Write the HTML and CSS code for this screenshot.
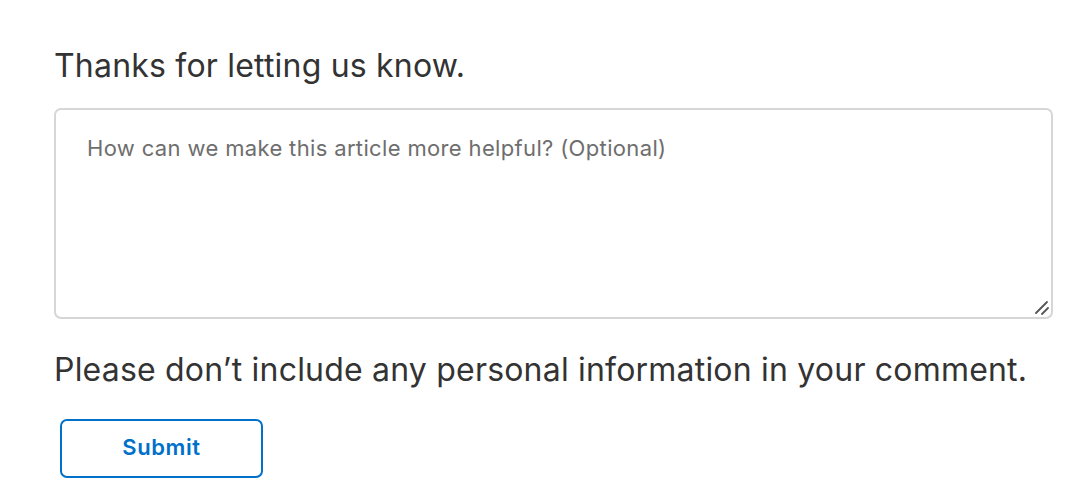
FILE: index.html
```html
<!DOCTYPE html>
<html lang="en">
<head>
  <meta charset="UTF-8">
  <meta name="viewport" content="width=device-width, initial-scale=1.0">
  <title>Feedback</title>
  <link rel="stylesheet" href="styles.css">
</head>
<body>

<div class="feedback">
  <p class="feedback-title">Thanks for letting us know.</p>
  <div class="feedback-field">
    <textarea class="feedback-text" placeholder="How can we make this article more helpful? (Optional)"></textarea>
    <svg class="feedback-grip" width="16" height="16" viewBox="0 0 16 16">
      <line x1="2" y1="14" x2="13" y2="3" stroke="#555" stroke-width="1.8" stroke-linecap="round"/>
      <line x1="8" y1="15" x2="14" y2="9" stroke="#555" stroke-width="1.8" stroke-linecap="round"/>
    </svg>
  </div>
  <p class="feedback-note">Please don’t include any personal information in your comment.</p>
  <button class="feedback-submit">Submit</button>
</div>

</body>
</html>
```

FILE: styles.css
```css
body {
  margin: 0;
  font-family: Inter, "Noto Sans", sans-serif;
  background-color: #fff;
  color: #333;
}
.feedback {
  padding: 46px 40px 0 54px;
  display: flex;
  flex-direction: column;
  align-items: flex-start;
}
.feedback-title {
  margin: 0;
  font-size: 32px;
  letter-spacing: 0.2px;
  line-height: 40px;
}
.feedback-field {
  position: relative;
  margin-top: 22px;
  width: 999px;
  height: 211px;
}
.feedback-text {
  display: block;
  box-sizing: border-box;
  width: 100%;
  height: 100%;
  padding: 25px 31px;
  border: 2px solid #d6d6d6;
  border-radius: 7px;
  font-family: inherit;
  font-size: 22px;
  letter-spacing: 0.35px;
  color: #333;
  resize: none;
}
.feedback-text::placeholder {
  color: #6e6e6e;
}
.feedback-grip {
  position: absolute;
  right: 3px;
  bottom: 4px;
  pointer-events: none;
}
.feedback-note {
  margin: 31px 0 0 0;
  font-size: 32px;
  letter-spacing: 0.2px;
  line-height: 40px;
}
.feedback-submit {
  margin: 29px 0 0 6px;
  padding: 0 0 3px 0;
  width: 203px;
  height: 59px;
  border: 2px solid #0070c9;
  border-radius: 7px;
  background-color: #fff;
  color: #0070c9;
  font-family: inherit;
  font-size: 22px;
  font-weight: 600;
  letter-spacing: 0.6px;
  cursor: pointer;
}
```
